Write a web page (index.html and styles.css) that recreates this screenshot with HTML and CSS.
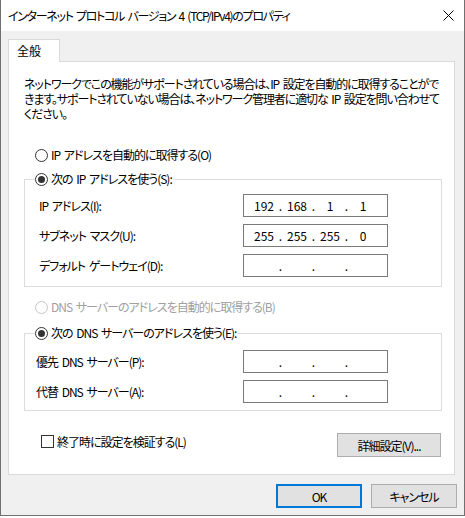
FILE: index.html
```html
<!DOCTYPE html>
<html lang="ja">
<head>
    <meta charset="UTF-8">
    <meta name="viewport" content="width=device-width, initial-scale=1.0">
    <title>インターネット プロトコル バージョン 4 (TCP/IPv4)のプロパティ</title>
    <link rel="stylesheet" href="styles.css">
</head>
<body>
    <div class="window">
        <div class="titlebar">
            <span class="title">インターネット プロトコル バージョン 4 (TCP/IPv4)のプロパティ</span>
            <button class="close-btn" aria-label="閉じる">
                <svg width="11" height="11" viewBox="0 0 11 11">
                    <path d="M0.5 0.5 L10.5 10.5 M10.5 0.5 L0.5 10.5" stroke="#000" stroke-width="1" fill="none"/>
                </svg>
            </button>
        </div>

        <div class="dialog">
            <div class="tabs">
                <div class="tab">全般</div>
            </div>

            <div class="panel">
                <p class="intro">ネットワークでこの機能がサポートされている場合は、IP 設定を自動的に取得することがで<br>きます。サポートされていない場合は、ネットワーク管理者に適切な IP 設定を問い合わせて<br>ください。</p>

                <label class="radio-row radio-row-top"><span class="radio"></span>IP アドレスを自動的に取得する(O)</label>

                <fieldset class="group group-ip">
                    <legend><label class="radio-row"><span class="radio checked"></span>次の IP アドレスを使う(S):</label></legend>
                    <div class="field-row">
                        <span class="field-label">IP アドレス(I):</span>
                        <div class="ip-input">
                            <span class="octet">192</span><span class="dot">.</span><span class="octet">168</span><span class="dot">.</span><span class="octet">1</span><span class="dot">.</span><span class="octet">1</span>
                        </div>
                    </div>
                    <div class="field-row">
                        <span class="field-label">サブネット マスク(U):</span>
                        <div class="ip-input">
                            <span class="octet">255</span><span class="dot">.</span><span class="octet">255</span><span class="dot">.</span><span class="octet">255</span><span class="dot">.</span><span class="octet">0</span>
                        </div>
                    </div>
                    <div class="field-row">
                        <span class="field-label">デフォルト ゲートウェイ(D):</span>
                        <div class="ip-input">
                            <span class="octet"></span><span class="dot">.</span><span class="octet"></span><span class="dot">.</span><span class="octet"></span><span class="dot">.</span><span class="octet"></span>
                        </div>
                    </div>
                </fieldset>

                <label class="radio-row radio-row-dns disabled"><span class="radio"></span>DNS サーバーのアドレスを自動的に取得する(B)</label>

                <fieldset class="group group-dns">
                    <legend><label class="radio-row"><span class="radio checked"></span>次の DNS サーバーのアドレスを使う(E):</label></legend>
                    <div class="field-row">
                        <span class="field-label">優先 DNS サーバー(P):</span>
                        <div class="ip-input">
                            <span class="octet"></span><span class="dot">.</span><span class="octet"></span><span class="dot">.</span><span class="octet"></span><span class="dot">.</span><span class="octet"></span>
                        </div>
                    </div>
                    <div class="field-row">
                        <span class="field-label">代替 DNS サーバー(A):</span>
                        <div class="ip-input">
                            <span class="octet"></span><span class="dot">.</span><span class="octet"></span><span class="dot">.</span><span class="octet"></span><span class="dot">.</span><span class="octet"></span>
                        </div>
                    </div>
                </fieldset>

                <div class="panel-footer">
                    <label class="check-row"><span class="checkbox"></span>終了時に設定を検証する(L)</label>
                    <button class="btn btn-advanced">詳細設定(V)...</button>
                </div>
            </div>

            <div class="dialog-buttons">
                <button class="btn btn-default">OK</button>
                <button class="btn">キャンセル</button>
            </div>
        </div>
    </div>
</body>
</html>
```

FILE: styles.css
```css
body {
    margin: 0;
    background: #fff;
    font-family: "Noto Sans CJK JP", "Noto Sans", sans-serif;
    font-size: 12px;
    font-feature-settings: "palt" 1;
    letter-spacing: -1px;
    word-spacing: 2px;
    color: #000;
}

.window {
    width: 465px;
    box-sizing: border-box;
    border: 1px solid #707070;
    border-top: none;
    background: #f0f0f0;
}

.titlebar {
    height: 31px;
    display: flex;
    align-items: center;
    justify-content: space-between;
    padding: 0 10px 0 7px;
    background: #fff;
}

.title {
    line-height: 16px;
    letter-spacing: -1.3px;
    white-space: nowrap;
}

.close-btn {
    display: flex;
    padding: 0;
    background: none;
    border: none;
    margin-top: -1px;
}

.dialog {
    padding: 8px 7px 7px 7px;
}

.tabs {
    display: flex;
}

.tab {
    position: relative;
    z-index: 1;
    width: 52px;
    height: 23px;
    box-sizing: border-box;
    margin-bottom: -1px;
    padding: 3px 0 0 8px;
    line-height: 16px;
    letter-spacing: 0;
    background: #fff;
    border: 1px solid #d9d9d9;
    border-bottom: none;
}

.panel {
    width: 447px;
    box-sizing: border-box;
    padding: 14px 0 17px 15px;
    background: #fff;
    border: 1px solid #d9d9d9;
}

.intro {
    margin: 0;
    line-height: 15px;
    letter-spacing: -1.1px;
    white-space: nowrap;
}

.radio-row {
    display: flex;
    align-items: center;
    gap: 3px;
    height: 16px;
    line-height: 16px;
    white-space: nowrap;
}

.radio-row-top {
    margin: 26px 0 0 11px;
}

.radio-row-dns {
    margin: 12px 0 0 11px;
}

.radio {
    flex: none;
    width: 13px;
    height: 13px;
    box-sizing: border-box;
    border: 1px solid #333;
    border-radius: 50%;
    background: #fff;
    display: flex;
    align-items: center;
    justify-content: center;
}

.radio.checked::after {
    content: "";
    width: 7px;
    height: 7px;
    border-radius: 50%;
    background: #333;
}

.disabled {
    color: #a0a0a0;
}

.disabled .radio {
    border-color: #c6c6c6;
}

.group {
    width: 418px;
    box-sizing: border-box;
    margin: 8px 0 0 0;
    padding: 7px 0 9px 10px;
    border: 1px solid #dcdcdc;
    min-width: 0;
}

.group legend {
    padding: 0 1px 0 0;
}

.group-dns {
    margin-top: 10px;
    padding: 9px 0 7px 10px;
}

.field-row {
    display: flex;
    align-items: center;
}

.field-row + .field-row {
    margin-top: 7px;
}

.field-label {
    width: 208px;
    box-sizing: border-box;
    padding-left: 4px;
    white-space: nowrap;
}

.group-dns .field-label {
    padding-left: 1px;
}

.ip-input {
    width: 145px;
    height: 23px;
    box-sizing: border-box;
    display: flex;
    align-items: center;
    padding-left: 8px;
    letter-spacing: 0;
    border: 1px solid #7a7a7a;
    background: #fff;
}

.octet {
    width: 24px;
    text-align: center;
}

.dot {
    width: 9px;
    text-align: center;
}

.panel-footer {
    width: 418px;
    margin-top: 22px;
    display: flex;
    justify-content: space-between;
    align-items: flex-start;
}

.check-row {
    display: flex;
    align-items: center;
    gap: 3px;
    height: 16px;
    margin-left: 17px;
    white-space: nowrap;
}

.checkbox {
    flex: none;
    width: 13px;
    height: 13px;
    box-sizing: border-box;
    border: 1px solid #333;
    background: #fff;
}

.btn {
    height: 24px;
    box-sizing: border-box;
    padding: 0;
    font: inherit;
    letter-spacing: inherit;
    word-spacing: inherit;
    color: #000;
    background: #e1e1e1;
    border: 1px solid #adadad;
}

.btn-advanced {
    width: 104px;
    margin-right: 1px;
}

.dialog-buttons {
    display: flex;
    justify-content: flex-end;
    gap: 9px;
    margin-top: 9px;
}

.dialog-buttons .btn {
    width: 86px;
}

.btn-default {
    border: 2px solid #0078d7;
}
```
